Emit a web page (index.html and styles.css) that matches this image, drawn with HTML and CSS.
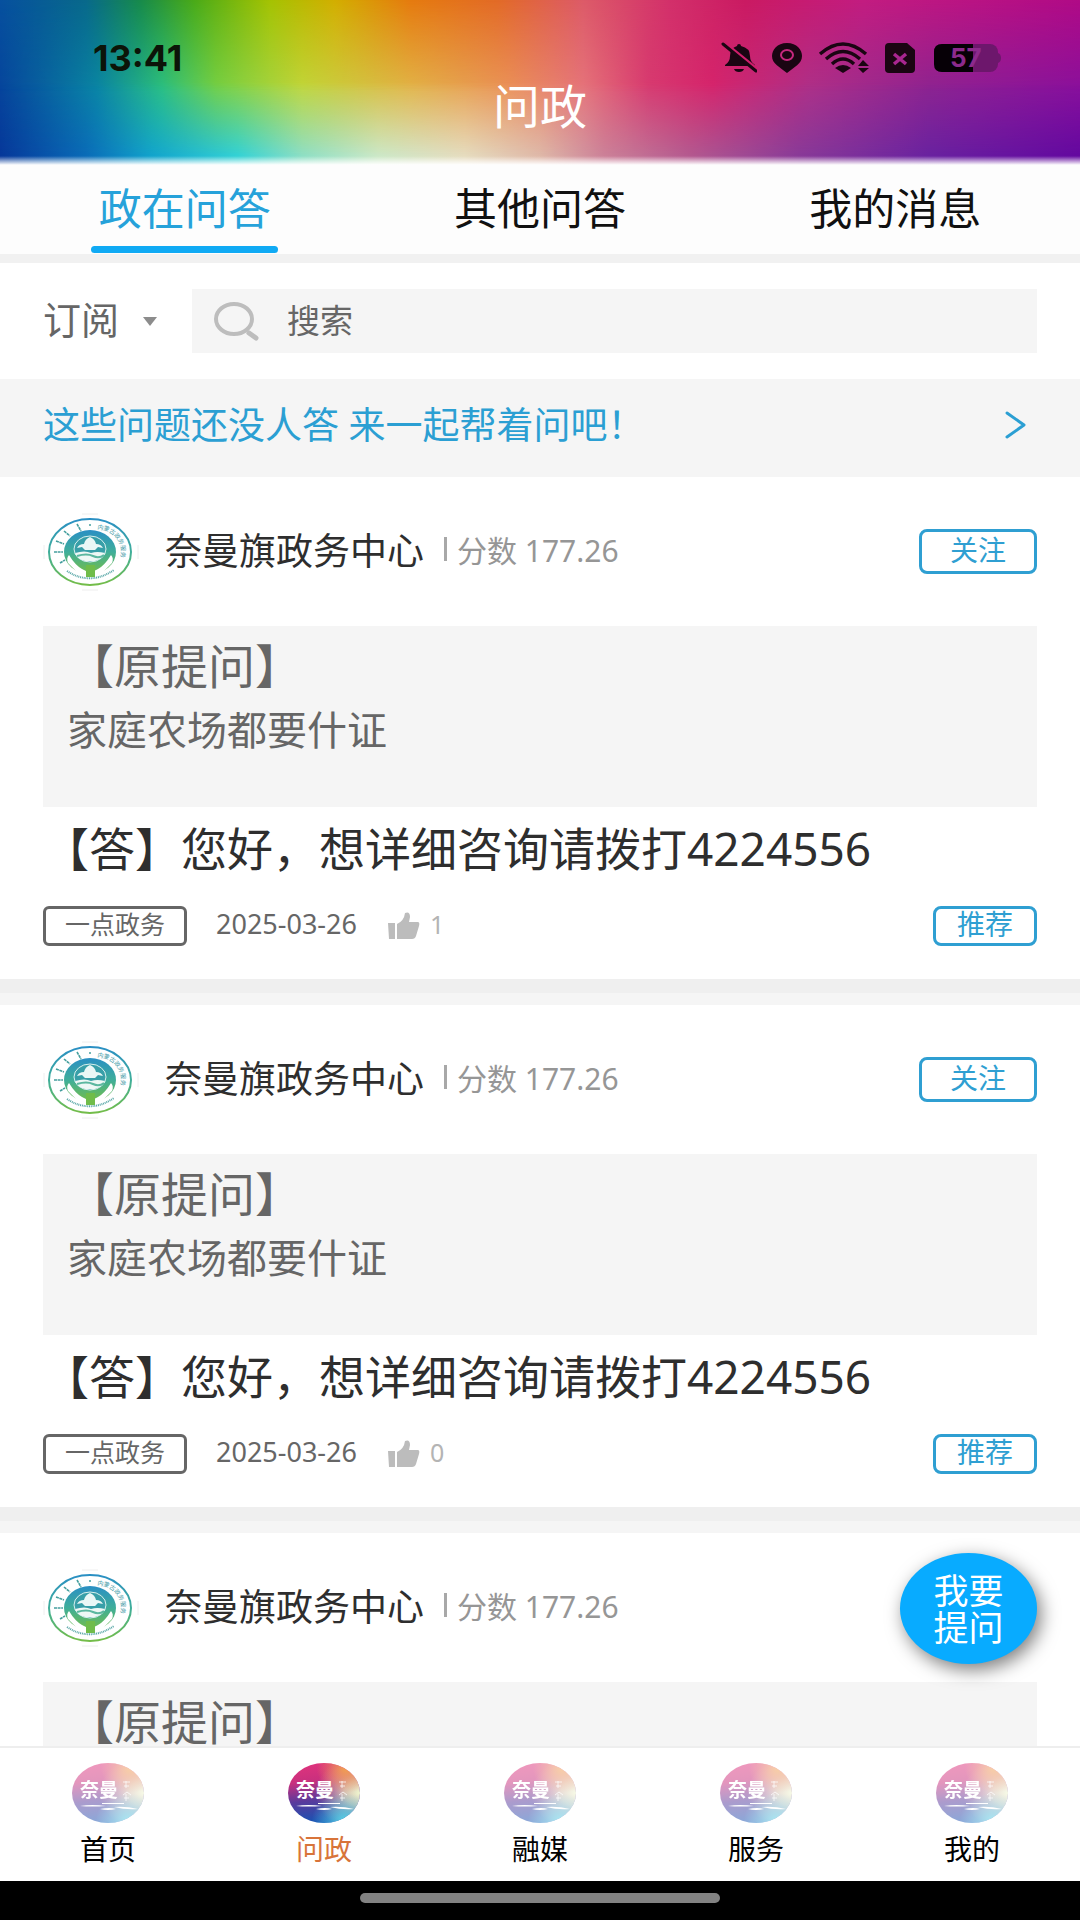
FILE: index.html
```html
<!DOCTYPE html>
<html lang="zh-CN">
<head>
<meta charset="utf-8">
<meta name="viewport" content="width=device-width, initial-scale=1">
<title>问政</title>
<link rel="stylesheet" href="styles.css">
</head>
<body>
<svg class="defs" aria-hidden="true">
  <defs>
    <linearGradient id="sealFill" x1="0" y1="0" x2="0" y2="1">
      <stop offset="0" stop-color="#2a8fc4"/><stop offset=".5" stop-color="#3fae9a"/><stop offset="1" stop-color="#74bd48"/>
    </linearGradient>
    <linearGradient id="logoBase" x1=".25" y1="0" x2=".4" y2="1">
      <stop offset="0" stop-color="#e0337c"/><stop offset=".3" stop-color="#c9307e"/><stop offset=".62" stop-color="#5a3a9c"/><stop offset="1" stop-color="#1554b4"/>
    </linearGradient>
    <radialGradient id="logoLight" cx="1" cy=".5" r=".62">
      <stop offset="0" stop-color="#f0f8d0"/><stop offset=".35" stop-color="#e8d8b8" stop-opacity=".85"/><stop offset="1" stop-color="#e890a0" stop-opacity="0"/>
    </radialGradient>
    <radialGradient id="logoWarm" cx=".8" cy=".1" r=".4">
      <stop offset="0" stop-color="#f0a050"/><stop offset="1" stop-color="#f0905a" stop-opacity="0"/>
    </radialGradient>
    <radialGradient id="logoCyan" cx=".78" cy=".95" r=".45">
      <stop offset="0" stop-color="#58d0e4"/><stop offset="1" stop-color="#58c8e4" stop-opacity="0"/>
    </radialGradient>
  </defs>
  <symbol id="seal" viewBox="0 0 96 78">
    <path d="M39 1h16M39 77h16M1 32v14M95 32v14" stroke="#eee" fill="none"/>
    <ellipse cx="47" cy="39" rx="41" ry="33" fill="#fff" stroke="url(#sealFill)" stroke-width="2"/>
    <ellipse cx="47" cy="39" rx="26" ry="22" fill="url(#sealFill)"/>
    <ellipse cx="47" cy="36" rx="16" ry="13" fill="#389fa8" stroke="#d8f0ee"/>
    <path d="M34 35q2-4 7-4 1-5 6-7 5 2 6 7 5 0 7 4l-5-1-3 3h-10l-3-3z" fill="#eaf7f6"/>
    <path d="M32 40q10-3 16 0 6-2 14 0-2 5-10 8H42q-8-2-10-8z" fill="#eef8f5"/>
    <path d="M34 43q10-3 16 0t11-1" stroke="#5cb8a0" fill="none" stroke-width="2"/>
    <path d="M26 42q6 10 13 14l6 3v9h-5q-3-6-7-10l-8-8q-2-5 1-8zM68 42q-6 10-13 14l-6 3v9h5q3-6 7-10l8-8q2-5-1-8z" fill="#fff"/>
    <path d="M43 52h9v12h-9z" fill="#70bc4a"/>
    <path d="M17 50l5-3M11 39h9M13 28l8 3M21 18l6 5M34 11l4 7" stroke="#459f9e" stroke-width="1.6" fill="none" stroke-dasharray="3 .6"/>
    <circle cx="47" cy="12" r="1" fill="#459f9e"/>
    <path id="sealTop" d="M54 16Q74 18 78 35Q79 46 73 54" fill="none"/>
    <text class="seal-text"><textPath href="#sealTop">内蒙古政务服务</textPath></text>
    <path d="M24 58Q47 73 71 57" fill="none" stroke="#5aa8a8" stroke-width="2" stroke-dasharray="1 .8"/>
  </symbol>
  <symbol id="logo" viewBox="0 0 72 60">
    <ellipse cx="36" cy="30" rx="36" ry="30" fill="url(#logoBase)"/>
    <ellipse cx="36" cy="30" rx="36" ry="30" fill="url(#logoLight)"/>
    <ellipse cx="36" cy="30" rx="36" ry="30" fill="url(#logoWarm)"/>
    <ellipse cx="36" cy="30" rx="36" ry="30" fill="url(#logoCyan)"/>
    <text x="8" y="34" class="logo-text">奈曼</text>
    <path d="M51 19h7M54 18v7M52 23h5M51 32l4-3 4 3M54 31v7M52 35h5" stroke="#fff" stroke-width="1" opacity=".75" fill="none"/>
    <path d="M8 43q12-2 26 0-14 1-26 0zM30 40h22v1H30zM28 46q10-2 16 0-8 2-16 0zM42 44q12-1 24 2-12 1-24-2z" fill="#fff"/>
  </symbol>
</svg>

<div class="app">
  <header class="header">
    <div class="status">
      <time class="clock">13:41</time>
      <div class="status-icons">
        <svg width="36" height="32" viewBox="0 0 36 32"><path d="M18 2q2 0 2 2 9 2 9 10 0 6 5 9v1H4v-1q5-3 5-9 0-8 7-10 0-2 2-2zM13 27h10q-1 3-5 3t-5-3z" fill="#1a0512"/><path d="M4 1l32 26" stroke="#cf1e6c" stroke-width="3"/><path d="M2 2l33 27" stroke="#1a0512" stroke-width="3" stroke-linecap="round"/></svg>
        <svg class="pin" width="32" height="32" viewBox="0 0 32 32"><path d="M16 1C6 1 1 8 1 14c0 8 8 11 15 17 7-6 15-9 15-17C31 8 26 1 16 1z" fill="#1a0512"/><ellipse cx="16" cy="13" rx="6" ry="5" fill="#1a0512" stroke="#c5287e" stroke-width="2"/></svg>
        <svg class="wifi" width="54" height="32" viewBox="0 0 54 32"><g fill="none" stroke="#1a0512" stroke-width="3.4"><path d="M3 12Q26-8 49 12"/><path d="M9 17Q26 2 43 17"/><path d="M15 22Q26 12 37 22"/></g><path d="M18 26q8-6 16 0l-8 5z" fill="#1a0512"/><path d="M41 24l5-6 6 6zM41 26h11l-6 5z" fill="#1a0512"/></svg>
        <svg class="sim" width="30" height="30" viewBox="0 0 30 30"><path d="M4 0h18l8 7v19q0 4-4 4H4q-4 0-4-4V4q0-4 4-4z" fill="#1a0512"/><path d="M9 11l12 10M21 11L9 21" stroke="#a92690" stroke-width="3.5"/></svg>
        <svg class="battery" width="68" height="30" viewBox="0 0 68 30"><rect x="1" y="1" width="64" height="28" rx="8" fill="#6d176c"/><path d="M65 10q3 1 3 5t-3 5z" fill="#6d176c"/><path d="M9 1h31v28H9q-8 0-8-8V9q0-8 8-8z" fill="#060006"/><text x="17" y="24" class="battery-text">57</text></svg>
      </div>
    </div>
    <h1 class="title">问政</h1>
  </header>

  <nav class="tabs">
    <a class="tab tab-active" href="#">政在问答</a>
    <a class="tab" href="#">其他问答</a>
    <a class="tab" href="#">我的消息</a>
  </nav>

  <form class="filters">
    <div class="subscribe">
      <select class="subscribe-select" aria-label="订阅"><option>订阅</option></select>
      <svg class="caret" width="14" height="9" viewBox="0 0 14 9"><path d="M0 0h14L7 9z" fill="#8c8c8c"/></svg>
    </div>
    <label class="search">
      <svg width="46" height="40" viewBox="0 0 46 40"><ellipse cx="21" cy="18" rx="18" ry="15" fill="none" stroke="#bdbdbd" stroke-width="4"/><path d="M36 32l7 5" stroke="#bdbdbd" stroke-width="5" stroke-linecap="round"/></svg>
      <input class="search-input" type="text" placeholder="搜索" aria-label="搜索">
    </label>
  </form>

  <a class="notice" href="#">
    <span>这些问题还没人答 来一起帮着问吧！</span>
    <svg width="22" height="30" viewBox="0 0 22 30"><path d="M3 3l17 12L3 27" fill="none" stroke="#2b9fd3" stroke-width="3" stroke-linecap="round" stroke-linejoin="round"/></svg>
  </a>

  <main class="feed">
    <article class="card">
      <div class="card-head">
        <svg class="avatar" width="96" height="78"><use href="#seal"/></svg>
        <h2 class="name">奈曼旗政务中心</h2>
        <span class="score">分数 177.26</span>
        <button class="outline follow" type="button">关注</button>
      </div>
      <div class="question"><p class="question-title">【原提问】</p><p class="question-text">家庭农场都要什证</p></div>
      <p class="answer">【答】您好，想详细咨询请拨打4224556</p>
      <div class="meta">
        <span class="tag">一点政务</span><time class="date">2025-03-26</time>
        <button class="like" type="button"><svg width="32" height="28" viewBox="0 0 32 28"><path d="M0 11h7v16H1zM9 12q7-3 8-11 5-2 5 4l-1 5h9q2 0 1 4l-3 10q-1 3-4 3H9z" fill="#bcbcbc"/></svg><span class="like-count">1</span></button>
        <button class="outline recommend" type="button">推荐</button>
      </div>
    </article>

    <article class="card">
      <div class="card-head">
        <svg class="avatar" width="96" height="78"><use href="#seal"/></svg>
        <h2 class="name">奈曼旗政务中心</h2>
        <span class="score">分数 177.26</span>
        <button class="outline follow" type="button">关注</button>
      </div>
      <div class="question"><p class="question-title">【原提问】</p><p class="question-text">家庭农场都要什证</p></div>
      <p class="answer">【答】您好，想详细咨询请拨打4224556</p>
      <div class="meta">
        <span class="tag">一点政务</span><time class="date">2025-03-26</time>
        <button class="like" type="button"><svg width="32" height="28" viewBox="0 0 32 28"><path d="M0 11h7v16H1zM9 12q7-3 8-11 5-2 5 4l-1 5h9q2 0 1 4l-3 10q-1 3-4 3H9z" fill="#bcbcbc"/></svg><span class="like-count">0</span></button>
        <button class="outline recommend" type="button">推荐</button>
      </div>
    </article>

    <article class="card">
      <div class="card-head">
        <svg class="avatar" width="96" height="78"><use href="#seal"/></svg>
        <h2 class="name">奈曼旗政务中心</h2>
        <span class="score">分数 177.26</span>
      </div>
      <div class="question"><p class="question-title">【原提问】</p></div>
    </article>
    <button class="ask" type="button">我要<br>提问</button>
  </main>

  <nav class="bottom-nav">
    <a class="nav-item" href="#"><svg class="nav-logo" width="72" height="60"><use href="#logo"/></svg>首页</a>
    <a class="nav-item nav-active" href="#"><svg class="nav-logo" width="72" height="60"><use href="#logo"/></svg>问政</a>
    <a class="nav-item" href="#"><svg class="nav-logo" width="72" height="60"><use href="#logo"/></svg>融媒</a>
    <a class="nav-item" href="#"><svg class="nav-logo" width="72" height="60"><use href="#logo"/></svg>服务</a>
    <a class="nav-item" href="#"><svg class="nav-logo" width="72" height="60"><use href="#logo"/></svg>我的</a>
  </nav>
  <div class="gesture"><span class="gesture-pill"></span></div>
</div>
</body>
</html>
```
FILE: styles.css
```css
* { box-sizing: border-box; }

body {
  margin: 0;
  background: #fff;
  color: #222;
  font-family: "Noto Sans", "Noto Sans CJK SC", sans-serif;
}

h1, h2, p { margin: 0; font-weight: 400; }
a { color: inherit; text-decoration: none; }
button, input, select { font-family: inherit; padding: 0; border: 0; background: none; }
svg { display: block; flex: none; }

.defs { position: absolute; width: 0; height: 0; }
.seal-text { font-size: 6px; fill: #3f9aa6; }
.logo-text { font-size: 19px; font-weight: 700; fill: #fff; }
.battery-text { font-family: Inter, sans-serif; font-size: 26px; font-weight: 700; fill: #8c2a8c; }

.app {
  display: flex;
  flex-direction: column;
  height: 100vh;
  overflow: hidden;
}

/* Header: three colour bands blended from top to bottom */
.header {
  position: relative;
  flex: none;
  height: 165px;
  padding-top: 38px;
  background:
    linear-gradient(transparent 156px, #fff 165px),
    linear-gradient(90deg, #06389a 0%, #0a6cb8 8%, #12a4cc 14%, #34d2d4 22%, #8edfc4 28%, #cce8c6 35%, #e6dcbe 43%, #dfb8a8 50%, #cc8098 56%, #b4588f 64%, #8a3a98 74%, #6a22a0 86%, #6408a0 100%);
}
.header::before, .header::after {
  content: "";
  position: absolute;
  inset: 0;
}
.header::before {
  background: linear-gradient(90deg, #06459c 0%, #0a86a4 9%, #2cc080 15%, #76d044 20%, #c2d63a 28%, #e2b448 38%, #eb9258 47%, #e6747a 54%, #d83a70 60%, #d6246c 66%, #ae3088 75%, #8e2490 86%, #8a109c 100%);
  mask-image: linear-gradient(#000 50%, transparent 94%);
}
.header::after {
  background: linear-gradient(90deg, #06509e 0%, #08698a 8%, #178a4a 13%, #4aaa18 18%, #a4c202 25%, #d2ae00 31%, #e57a0e 38%, #e26a26 46%, #dc5a68 54%, #d2306a 62%, #ca1a62 69%, #c21c80 80%, #b00a86 100%);
  mask-image: linear-gradient(#000 0%, transparent 55%);
}
.status, .title { position: relative; z-index: 1; }
.status {
  display: flex;
  justify-content: space-between;
  align-items: center;
  height: 40px;
  padding: 0 79px 0 93px;
}
.clock {
  color: #0c1408;
  font: 700 36px/40px Inter, sans-serif;
}
.status-icons { display: flex; align-items: center; }
.pin, .wifi, .sim { margin-left: 14px; }
.battery { margin-left: 18px; }
.title {
  color: #fff;
  font-size: 47px;
  line-height: 56px;
  text-align: center;
}

.tabs {
  display: flex;
  flex: none;
  height: 98px;
  padding: 0 7px;
  background: #fdfdfd;
  border-bottom: 9px solid #f1f1f1;
}
.tab {
  display: flex;
  flex: 1;
  flex-direction: column;
  align-items: center;
  padding-top: 7px;
  color: #111;
  font-size: 43px;
  line-height: 74px;
}
.tab-active { color: #26a2da; }
.tab-active::after {
  content: "";
  width: 187px;
  height: 7px;
  border-radius: 4px;
  background: #10aaf4;
}

.filters {
  display: flex;
  flex: none;
  gap: 35px;
  padding: 26px 43px;
}
.subscribe { display: flex; align-items: center; gap: 22px; }
.subscribe-select {
  width: 78px;
  padding-bottom: 4px;
  appearance: none;
  color: #666;
  font-size: 38px;
  line-height: 60px;
}
.search {
  display: flex;
  flex: 1;
  align-items: center;
  gap: 28px;
  height: 64px;
  padding-left: 21px;
  background: #f5f5f5;
}
.search-input { flex: 1; min-width: 0; padding-bottom: 2px; color: #333; font-size: 33px; }
.search-input::placeholder { color: #666; opacity: 1; }

.notice {
  display: flex;
  flex: none;
  align-items: center;
  justify-content: space-between;
  height: 98px;
  padding: 0 54px 6px 43px;
  background: #f5f5f5;
  color: #2b9fd3;
  font-size: 37px;
  line-height: 48px;
}

.feed {
  position: relative;
  flex: 1;
  min-height: 0;
  overflow: hidden;
}
.card {
  height: 528px;
  padding: 0 43px;
  background: linear-gradient(#efefef 14px, #f5f5f5 14px) bottom / 100% 26px no-repeat;
}
.card-head { display: flex; align-items: center; height: 149px; }
.avatar { margin-right: 26px; }
.name { padding-bottom: 5px; color: #2e2e2e; font-size: 37px; }
.score {
  display: flex;
  align-items: center;
  gap: 10px;
  margin-left: 20px;
  padding-bottom: 5px;
  color: #969696;
  font-size: 30px;
}
.score::before {
  content: "";
  width: 3px;
  height: 24px;
  background: #a8a8a8;
}
.outline {
  margin-left: auto;
  padding-bottom: 3px;
  border: 3px solid #2f9fd2;
  border-radius: 8px;
  color: #2f9fd2;
  font-size: 28px;
}
.follow { width: 118px; height: 45px; line-height: 36px; }
.recommend { width: 104px; height: 40px; line-height: 31px; }
.question {
  height: 181px;
  padding: 10px 24px;
  background: #f5f5f5;
  color: #666;
}
.question-title { font-size: 47px; line-height: 60px; }
.question-text { font-size: 40px; line-height: 68px; }
.answer { color: #2e2e2e; font-size: 46px; line-height: 82px; white-space: nowrap; }
.meta { display: flex; align-items: center; height: 74px; }
.tag {
  width: 144px;
  height: 40px;
  border: 3px solid #666;
  border-radius: 6px;
  color: #666;
  font-size: 25px;
  line-height: 30px;
  text-align: center;
}
.date { margin-left: 29px; padding-bottom: 5px; color: #666; font-size: 27px; }
.like {
  display: flex;
  align-items: center;
  gap: 10px;
  margin-left: 31px;
  color: #b4b4b4;
  font-size: 25px;
}
.like-count { padding-bottom: 5px; }

.ask {
  position: absolute;
  right: 43px;
  bottom: 82px;
  width: 137px;
  height: 111px;
  border-radius: 50%;
  background: #08abff;
  box-shadow: 4px 6px 18px rgba(0, 0, 0, 0.5);
  color: #fff;
  font-size: 35px;
  line-height: 37px;
}

.bottom-nav {
  display: flex;
  flex: none;
  height: 135px;
  border-top: 2px solid #eee;
  background: #fff;
}
.nav-item {
  display: flex;
  flex: 1;
  flex-direction: column;
  align-items: center;
  gap: 6px;
  padding-top: 15px;
  color: #000;
  font-size: 28px;
  line-height: 40px;
}
.nav-logo { opacity: 0.5; }
.nav-active { color: #d8743a; }
.nav-active .nav-logo { opacity: 1; }

.gesture {
  display: flex;
  flex: none;
  align-items: center;
  justify-content: center;
  height: 39px;
  padding-bottom: 5px;
  background: #000;
}
.gesture-pill { width: 33.333%; height: 10px; border-radius: 5px; background: #828282; }
```
